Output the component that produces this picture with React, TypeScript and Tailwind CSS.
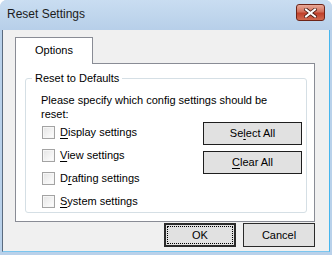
import React from "react";

function Mn({ children }: { children: React.ReactNode }) {
  return <span className="underline underline-offset-[2px]">{children}</span>;
}

function Check({ children }: { children: React.ReactNode }) {
  return (
    <label className="flex items-center h-[23px]">
      <span className="w-[13px] h-[13px] ml-[1px] border border-[#a3a3a3] bg-[linear-gradient(135deg,#e4e4e4,#ffffff)] shadow-[inset_0_0_0_1px_#f6f6f6]" />
      <span className="ml-[5px]">{children}</span>
    </label>
  );
}

export default function App() {
  return (
    <div className="w-[332px] h-[255px] flex flex-col bg-[#b9d1ea] rounded-t-[7px] overflow-hidden font-['Liberation_Sans',Arial,sans-serif] text-[11px] text-black">
      {/* title bar */}
      <div className="h-[30px] flex items-start justify-between pl-[7px] pr-[7px] bg-[linear-gradient(#c9ddf1,#b7cfe9)]">
        <span className="mt-[6px] text-[12px] leading-[16px] text-[#1b1b1b]">Reset Settings</span>
        <button className="mt-[4px] w-[29px] h-[17px] rounded-[3px] border border-[#6d2418] bg-[linear-gradient(#e9a998,#d2705c_45%,#c0402a_55%,#d06a50)] flex items-center justify-center">
          <svg width="13" height="10" viewBox="0 0 13 10">
            <path d="M2 1.5 L11 8.5 M11 1.5 L2 8.5" stroke="#4a1b12" strokeWidth="3.6" strokeLinecap="square" />
            <path d="M2 1.5 L11 8.5 M11 1.5 L2 8.5" stroke="#ffffff" strokeWidth="2" strokeLinecap="square" />
          </svg>
        </button>
      </div>

      {/* client */}
      <div className="ml-[2px] mr-[2px] h-[222px] border-l border-l-[#5b6b7e] border-r border-r-[#46b6ee] border-b border-b-[#7cc6ee] bg-[#f0f0f0] flex flex-col pl-[12px] pr-[14px] pt-[7px]">
        {/* tab header */}
        <div className="flex">
          <div className="w-[78px] h-[27px] bg-white border border-[#898c95] border-b-0 flex items-center justify-center relative z-10 mb-[-1px]">
            <span className="pb-[1px]">Options</span>
          </div>
        </div>
        {/* tab panel */}
        <div className="h-[159px] bg-white border border-[#898c95] pl-[9px] pr-[7px] pt-[14px]">
          <div className="relative h-[135px] border border-[#d5dfe5] rounded-[3px] pl-[15px] pr-[4px] pt-[14px]">
            <span className="absolute left-[6px] top-[-7px] px-[3px] bg-white leading-[13px]">Reset to Defaults</span>
            <p className="leading-[14px] pr-[20px]">Please specify which config settings should be reset:</p>
            <div className="flex">
              <div className="flex-1 flex flex-col">
                <Check><Mn>D</Mn>isplay settings</Check>
                <Check><Mn>V</Mn>iew settings</Check>
                <Check>D<Mn>r</Mn>afting settings</Check>
                <Check><Mn>S</Mn>ystem settings</Check>
              </div>
              <div className="w-[99px] flex flex-col gap-[6px] pt-[1px]">
                <button className="h-[23px] bg-[#e1e1e1] border border-[#1e1e1e]">Se<Mn>l</Mn>ect All</button>
                <button className="h-[23px] bg-[#e1e1e1] border border-[#1e1e1e]"><Mn>C</Mn>lear All</button>
              </div>
            </div>
          </div>
        </div>
        {/* dialog buttons */}
        <div className="flex justify-end gap-[7px] mt-[1px]">
          <button className="w-[72px] h-[24px] bg-[#e1e1e1] border-2 border-[#2a2a2a] p-[1px]">
            <span className="w-full h-full flex items-center justify-center border border-dotted border-black">OK</span>
          </button>
          <button className="w-[72px] h-[24px] bg-[#e1e1e1] border border-[#2a2a2a]">Cancel</button>
        </div>
      </div>
    </div>
  );
}
